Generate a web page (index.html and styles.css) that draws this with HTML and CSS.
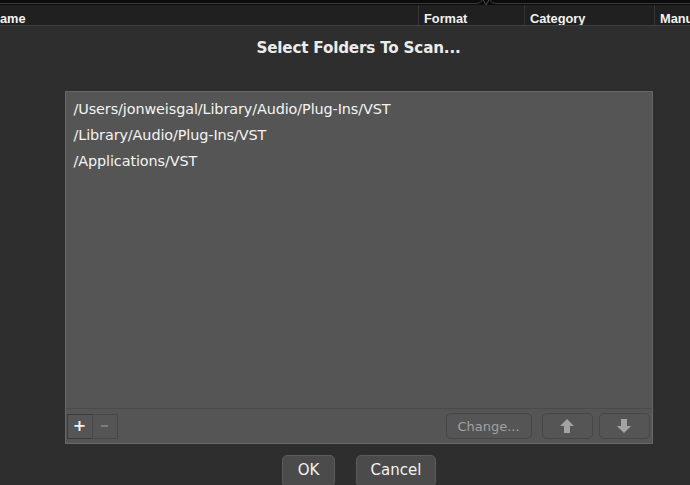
FILE: index.html
```html
<!DOCTYPE html>
<html>
<head>
<meta charset="utf-8">
<link rel="stylesheet" href="styles.css">
</head>
<body>
<div class="topstrip">
  <svg width="690" height="5" viewBox="0 0 690 5">
    <rect x="0" y="0" width="690" height="5" fill="#0c0c0c"/>
    <path d="M0 3.5 H476 Q481 3.5 482 0" stroke="#3a3a3a" stroke-width="1" fill="none"/>
    <path d="M490 0 Q491 3.5 496 3.5 H690" stroke="#3a3a3a" stroke-width="1" fill="none"/>
    <path d="M483 0 L486 5 L489 0" stroke="#4a4a4a" stroke-width="1" fill="none"/>
  </svg>
</div>
<div class="header">
  <div class="col col-name">ame</div>
  <div class="col col-format">Format</div>
  <div class="col col-cat">Category</div>
  <div class="col col-manu">Manu</div>
</div>
<div class="dialog">
  <h1 class="title">Select Folders To Scan...</h1>
  <div class="listbox">
    <ul class="list">
      <li>/Users/jonweisgal/Library/Audio/Plug-Ins/VST</li>
      <li>/Library/Audio/Plug-Ins/VST</li>
      <li>/Applications/VST</li>
    </ul>
    <div class="toolbar">
      <div class="pm">
        <button class="pmbtn plus">+</button>
        <button class="pmbtn minus"><span class="minusbar"></span></button>
      </div>
      <div class="spacer"></div>
      <button class="tbtn change">Change...</button>
      <button class="tbtn arrow">
        <svg width="14" height="14" viewBox="0 0 14 14"><path d="M7 0 L14 7 L10 7 L10 14 L4 14 L4 7 L0 7 Z" fill="#a3a3a3"/></svg>
      </button>
      <button class="tbtn arrow">
        <svg width="14" height="14" viewBox="0 0 14 14"><path d="M7 14 L14 7 L10 7 L10 0 L4 0 L4 7 L0 7 Z" fill="#a3a3a3"/></svg>
      </button>
    </div>
  </div>
  <div class="actions">
    <button class="dbtn ok">OK</button>
    <button class="dbtn cancel">Cancel</button>
  </div>
</div>
</body>
</html>
```

FILE: styles.css
```css
html, body {
  margin: 0;
  padding: 0;
  background: #2e2e2e;
  width: 690px;
  height: 485px;
  overflow: hidden;
  font-family: "DejaVu Sans", "Liberation Sans", sans-serif;
}
.topstrip svg { display: block; }
.header {
  display: flex;
  height: 20px;
  background: #202020;
  border-bottom: 1px solid #404040;
  color: #f2f2f2;
  font-family: "Liberation Sans", Arial, sans-serif;
  font-weight: bold;
  font-size: 12.8px;
  line-height: 27px;
}
.col {
  padding-left: 5px;
  box-sizing: border-box;
  border-right: 1px solid #343434;
  white-space: nowrap;
  overflow: hidden;
}
.col-name { width: 419px; padding-left: 0; }
.col-format { width: 106px; }
.col-cat { width: 130px; }
.col-manu { flex: 1; border-right: none; }
.dialog {
  display: flex;
  flex-direction: column;
  align-items: center;
  padding-left: 27px;
}
.title {
  margin: 11px 0 0 0;
  font-size: 15.2px;
  line-height: 22px;
  font-weight: bold;
  color: #ececec;
  letter-spacing: -0.2px;
}
.listbox {
  margin-top: 32px;
  width: 588px;
  height: 353px;
  box-sizing: border-box;
  border: 1px solid #686868;
  background: #555555;
  display: flex;
  flex-direction: column;
}
.list {
  list-style: none;
  margin: 0;
  padding: 4px 0 0 8px;
  flex: 1;
  color: #f4f4f4;
  font-size: 14.4px;
  line-height: 26px;
  border-bottom: 1px solid #4a4a4a;
  letter-spacing: -0.1px;
}
.toolbar {
  display: flex;
  align-items: center;
  height: 34px;
  padding: 0 2px 0 1px;
  box-sizing: border-box;
  gap: 6px;
}
.pm { display: flex; }
.spacer { flex: 1; }
button {
  font-family: inherit;
  margin: 0;
  padding: 0;
  box-sizing: border-box;
  cursor: default;
}
.pmbtn {
  width: 26px;
  height: 25px;
  background: #555555;
  border: 1px solid #484848;
  display: flex;
  align-items: center;
  justify-content: center;
  font-size: 16px;
  color: #f0f0f0;
}
.plus { border-color: #3c3c3c; font-weight: bold; line-height: 1; }
.minus { margin-left: -1px; }
.minusbar {
  width: 7px;
  height: 2px;
  background: #7c7c7c;
}
.tbtn {
  height: 26px;
  background: #555555;
  border: 1px solid #464646;
  border-radius: 5px;
  color: #a2a2a2;
  font-size: 13px;
  display: flex;
  align-items: center;
  justify-content: center;
}
.change { width: 86px; margin-right: 4px; }
.arrow { width: 51px; }
.arrow svg { display: block; }
.actions {
  display: flex;
  gap: 21px;
  margin-top: 11px;
  margin-left: 1px;
}
.dbtn {
  height: 32px;
  background: #4b4b4b;
  border: 1px solid #5b5b5b;
  border-radius: 5px;
  color: #f2f2f2;
  font-size: 15px;
  display: flex;
  align-items: center;
  justify-content: center;
  padding-bottom: 2px;
}
.ok { width: 53px; }
.cancel { width: 80px; }
```
